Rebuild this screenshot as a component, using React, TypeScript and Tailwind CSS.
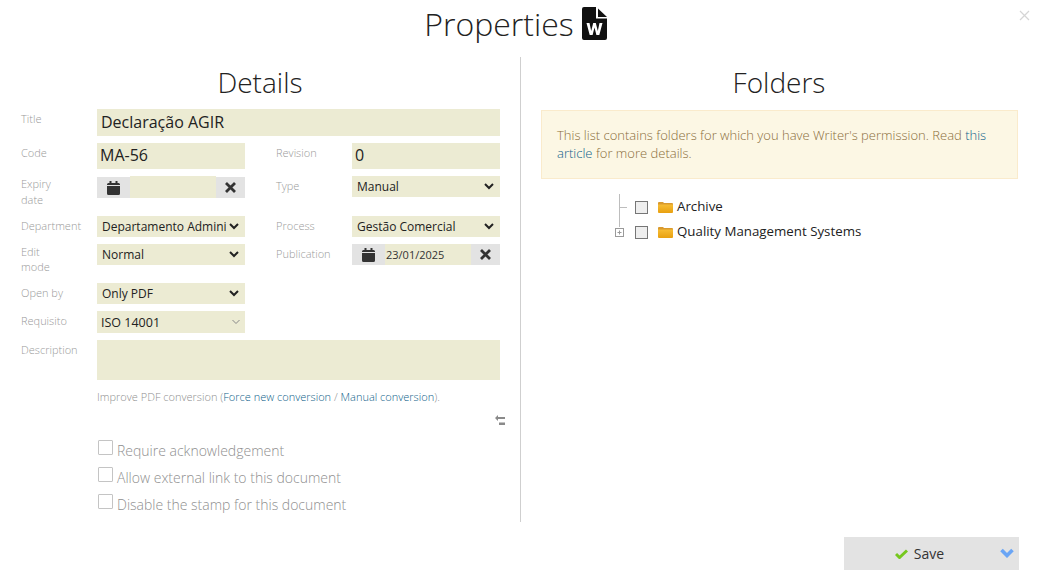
const labelCls = "text-[11px] leading-[16px] text-[#9a9a9a] font-light";

function Calendar() {
  return (
    <svg width="13" height="14" viewBox="0 0 13 14" fill="#333">
      <rect x="2.5" y="0" width="2" height="3" />
      <rect x="8.5" y="0" width="2" height="3" />
      <path d="M0 3.5a1.5 1.5 0 0 1 1.5-1.5h10A1.5 1.5 0 0 1 13 3.5V4H0z" />
      <path d="M0 5h13v7.5a1.5 1.5 0 0 1-1.5 1.5h-10A1.5 1.5 0 0 1 0 12.5z" />
    </svg>
  );
}

function Cross() {
  return (
    <svg width="11" height="11" viewBox="0 0 11 11" stroke="#333" strokeWidth="2.8" fill="none" className="mr-[1px]">
      <path d="M1 1l9 9M10 1l-9 9" />
    </svg>
  );
}

function NativeSelect({ value, options }: { value: string; options: string[] }) {
  return (
    <select
      defaultValue={value}
      className="w-[148px] h-[21px] bg-[#ecebd3] border-0 border-r-[3px] border-[#ecebd3] text-[12px] text-[#222] pl-[1px] outline-none"
    >
      {options.map((o) => (
        <option key={o}>{o}</option>
      ))}
    </select>
  );
}

function DateField({ value, tall }: { value?: string; tall?: boolean }) {
  return (
    <div className={"flex w-[148px] items-start " + (tall ? "h-[22px]" : "h-[21px]")}>
      <div className="w-[33px] h-[21px] bg-[#e3e3e3] flex items-center justify-center shrink-0 self-end">
        <Calendar />
      </div>
      <div className={"flex-1 bg-[#ecebd3] text-[11px] text-[#333] pl-[1px] leading-[21px] " + (tall ? "h-[22px]" : "h-[21px]")}>{value}</div>
      <div className="w-[29px] h-[21px] bg-[#e3e3e3] flex items-center justify-center shrink-0 self-end">
        <Cross />
      </div>
    </div>
  );
}

function Disabled({ text }: { text: string }) {
  return (
    <div className="flex items-start h-[27px] pl-[1px]">
      <span className="w-[15px] h-[15px] border border-[#c4c4c4] rounded-[1px] bg-white shrink-0" />
      <span className="ml-[4px] mt-[1px] text-[14px] leading-[19px] font-light text-[#8f8f8f]">{text}</span>
    </div>
  );
}

function Folder() {
  return (
    <svg width="15" height="12" viewBox="0 0 15 12">
      <defs>
        <linearGradient id="folderFront" x1="0" y1="0" x2="0" y2="1">
          <stop offset="0" stopColor="#f7bd35" />
          <stop offset="1" stopColor="#e8a010" />
        </linearGradient>
      </defs>
      <path d="M0 2a1 1 0 0 1 1-1h4l1 1h8a1 1 0 0 1 1 1v1H0z" fill="#d99a2e" />
      <path d="M0 3.5h15V11a1 1 0 0 1-1 1H1a1 1 0 0 1-1-1z" fill="url(#folderFront)" />
    </svg>
  );
}

function TreeBox() {
  return <span className="w-[13px] h-[13px] mt-[2px] border border-[#767676] bg-[#eeeeee] shrink-0" />;
}

export default function App() {
  return (
    <div className="relative w-[1042px] h-[577px] bg-white overflow-hidden font-['Open_Sans',sans-serif] text-[#333]">
      <button className="absolute left-[1019px] top-[10px] text-[#d5d5d5]" aria-label="Close">
        <svg width="11" height="11" viewBox="0 0 11 11" stroke="currentColor" strokeWidth="1.2" fill="none">
          <path d="M1 1l9 9M10 1l-9 9" />
        </svg>
      </button>

      <header className="h-[57px] flex justify-center items-start pt-[7px] pr-[11px]">
        <h1 className="text-[32px] leading-[34px] font-light text-[#222]">Properties</h1>
        <svg className="ml-[8px]" width="25" height="33" viewBox="0 0 25 33">
          <path d="M2 0h12v11.5h11V31a2 2 0 0 1-2 2H2a2 2 0 0 1-2-2V2a2 2 0 0 1 2-2z" fill="#111" />
          <path d="M16 1.5L25 10H16z" fill="#111" />
          <path
            d="M4.5 16h3l1.7 8 2-8h2.6l2 8 1.7-8h3l-3.2 12h-2.9l-1.9-7.4-1.9 7.4H7.7z"
            fill="#fff"
          />
        </svg>
      </header>

      <main className="flex h-[466px]">
        <section className="w-[521px] h-[465px] border-r border-[#cfcfcf] shrink-0">
          <h2 className="text-[28px] leading-[36px] mb-[9px] mt-[7px] font-light text-center text-[#222]">Details</h2>

          <div className="pl-[21px]">
            <div className="flex h-[27px]">
              <div className={labelCls + " w-[76px] pt-[2px]"}>Title</div>
              <input
                readOnly
                value="Declaração AGIR"
                className="w-[403px] h-[27px] bg-[#ecebd3] text-[16px] text-[#222] px-[4px] pb-[2px] outline-none"
              />
            </div>

            <div className="flex h-[26px] mt-[7px]">
              <div className={labelCls + " w-[76px] pt-[2px]"}>Code</div>
              <input
                readOnly
                value="MA-56"
                className="w-[148px] h-[26px] bg-[#ecebd3] text-[16px] text-[#222] px-[3px] pb-[2px] outline-none"
              />
              <div className={labelCls + " w-[76px] ml-[31px] pt-[2px]"}>Revision</div>
              <input
                readOnly
                value="0"
                className="w-[148px] h-[26px] bg-[#ecebd3] text-[16px] text-[#222] px-[3px] pb-[2px] outline-none"
              />
            </div>

            <div className="flex h-[33px] mt-[7px]">
              <div className={labelCls + " w-[76px]"}>
                Expiry
                <br />
                date
              </div>
              <DateField tall />
              <div className={labelCls + " w-[76px] ml-[31px] pt-[2px]"}>Type</div>
              <NativeSelect value="Manual" options={["Manual"]} />
            </div>

            <div className="flex h-[21px] mt-[7px]">
              <div className={labelCls + " w-[76px] pt-[2px]"}>Department</div>
              <NativeSelect value="Departamento Administrativo" options={["Departamento Administrativo"]} />
              <div className={labelCls + " w-[76px] ml-[31px] pt-[2px]"}>Process</div>
              <NativeSelect value="Gestão Comercial" options={["Gestão Comercial"]} />
            </div>

            <div className="flex h-[32px] mt-[7px]">
              <div className="w-[76px] text-[11px] leading-[15px] text-[#9a9a9a] font-light">
                Edit
                <br />
                mode
              </div>
              <NativeSelect value="Normal" options={["Normal"]} />
              <div className={labelCls + " w-[76px] ml-[31px] pt-[2px]"}>Publication</div>
              <DateField value="23/01/2025" />
            </div>

            <div className="flex h-[21px] mt-[7px]">
              <div className={labelCls + " w-[76px] pt-[2px]"}>Open by</div>
              <NativeSelect value="Only PDF" options={["Only PDF"]} />
            </div>

            <div className="flex h-[22px] mt-[7px]">
              <div className={labelCls + " w-[76px] pt-[2px]"}>Requisito</div>
              <div className="w-[148px] h-[22px] bg-[#ecebd3] flex items-center justify-between pl-[4px] pr-[3px] pt-[2px] text-[12.5px] text-[#222]">
                <span>ISO 14001</span>
                <svg width="10" height="6" viewBox="0 0 10 6" fill="none" stroke="#888" strokeWidth="1" className="mr-[1px] -mt-[2px]">
                  <path d="M1.5 1l3.5 3.5L8.5 1" />
                </svg>
              </div>
            </div>

            <div className="flex h-[40px] mt-[7px]">
              <div className={labelCls + " w-[76px] pt-[2px]"}>Description</div>
              <div className="w-[403px] h-[40px] bg-[#ecebd3]" />
            </div>

            <div className="ml-[76px] mt-[9px] text-[11px] leading-[16px] font-light text-[#8f8f8f]">
              Improve PDF conversion (<a className="text-[#0f5f8a]">Force new conversion</a> /{" "}
              <a className="text-[#0f5f8a]">Manual conversion</a>).
            </div>

            <div className="flex justify-end w-[484px] h-[12px] mt-[10px]">
              <svg width="10" height="11" viewBox="0 0 10 11" fill="#8a8a8a">
                <path d="M0 3l3-3v2h7v2H3v2z" />
                <rect x="4" y="7.5" width="6" height="2.5" />
              </svg>
            </div>

            <div className="ml-[76px] mt-[13px]">
              <Disabled text="Require acknowledgement" />
              <Disabled text="Allow external link to this document" />
              <Disabled text="Disable the stamp for this document" />
            </div>
          </div>
        </section>

        <section className="flex-1 pl-[20px] pr-[24px]">
          <h2 className="text-[28px] leading-[36px] mt-[7px] font-light text-center text-[#222] pr-[1px]">Folders</h2>
          <div className="mt-[10px] h-[69px] border border-[#faebcc] bg-[#fcf7e4] px-[15px] pt-[15px] text-[13px] font-light leading-[18px] text-[#8a6d3b]">
            This list contains folders for which you have Writer's permission. Read <a className="text-[#0f5f8a]">this article</a> for
            more details.
          </div>

          <div className="relative mt-[15px] ml-[73px] text-[13.3px] leading-[25px] text-[#222]">
            <span className="absolute left-[5px] top-0 h-[34px] w-px bg-[#bdbdbd]" />
            <span className="absolute left-[5px] top-[13px] h-px w-[8px] bg-[#bdbdbd]" />
            <div className="flex items-center h-[25px] pl-[21px]">
              <TreeBox />
              <span className="ml-[10px] mr-[4px] flex">
                <Folder />
              </span>
              <span>Archive</span>
            </div>
            <div className="flex items-center h-[25px] pl-[21px] relative">
              <svg className="absolute left-0 top-[8px] bg-white" width="11" height="11" viewBox="0 0 11 11" fill="none" stroke="#9a9a9a">
                <rect x="1.5" y="1.5" width="8" height="8" />
                <path d="M3.5 5.5h4M5.5 3.5v4" />
              </svg>
              <TreeBox />
              <span className="ml-[10px] mr-[4px] flex">
                <Folder />
              </span>
              <span>Quality Management Systems</span>
            </div>
          </div>
        </section>
      </main>

      <footer className="flex justify-end pr-[23px]">
        <button className="relative w-[175px] h-[33px] mt-[14px] bg-[#e3e3e3] flex items-center justify-center pr-[24px] text-[14px] text-[#333]">
          <svg width="13" height="10" viewBox="0 0 13 10" fill="none" stroke="#76c81e" strokeWidth="3" className="mr-[6px]">
            <path d="M1 5l3.5 3.5L12 1.5" />
          </svg>
          Save
          <svg className="absolute right-[5px] top-[11px]" width="14" height="10" viewBox="0 0 14 10" fill="none" stroke="#6aa5f5" strokeWidth="3.6">
            <path d="M1.5 2l5.5 5.5L12.5 2" />
          </svg>
        </button>
      </footer>
    </div>
  );
}
